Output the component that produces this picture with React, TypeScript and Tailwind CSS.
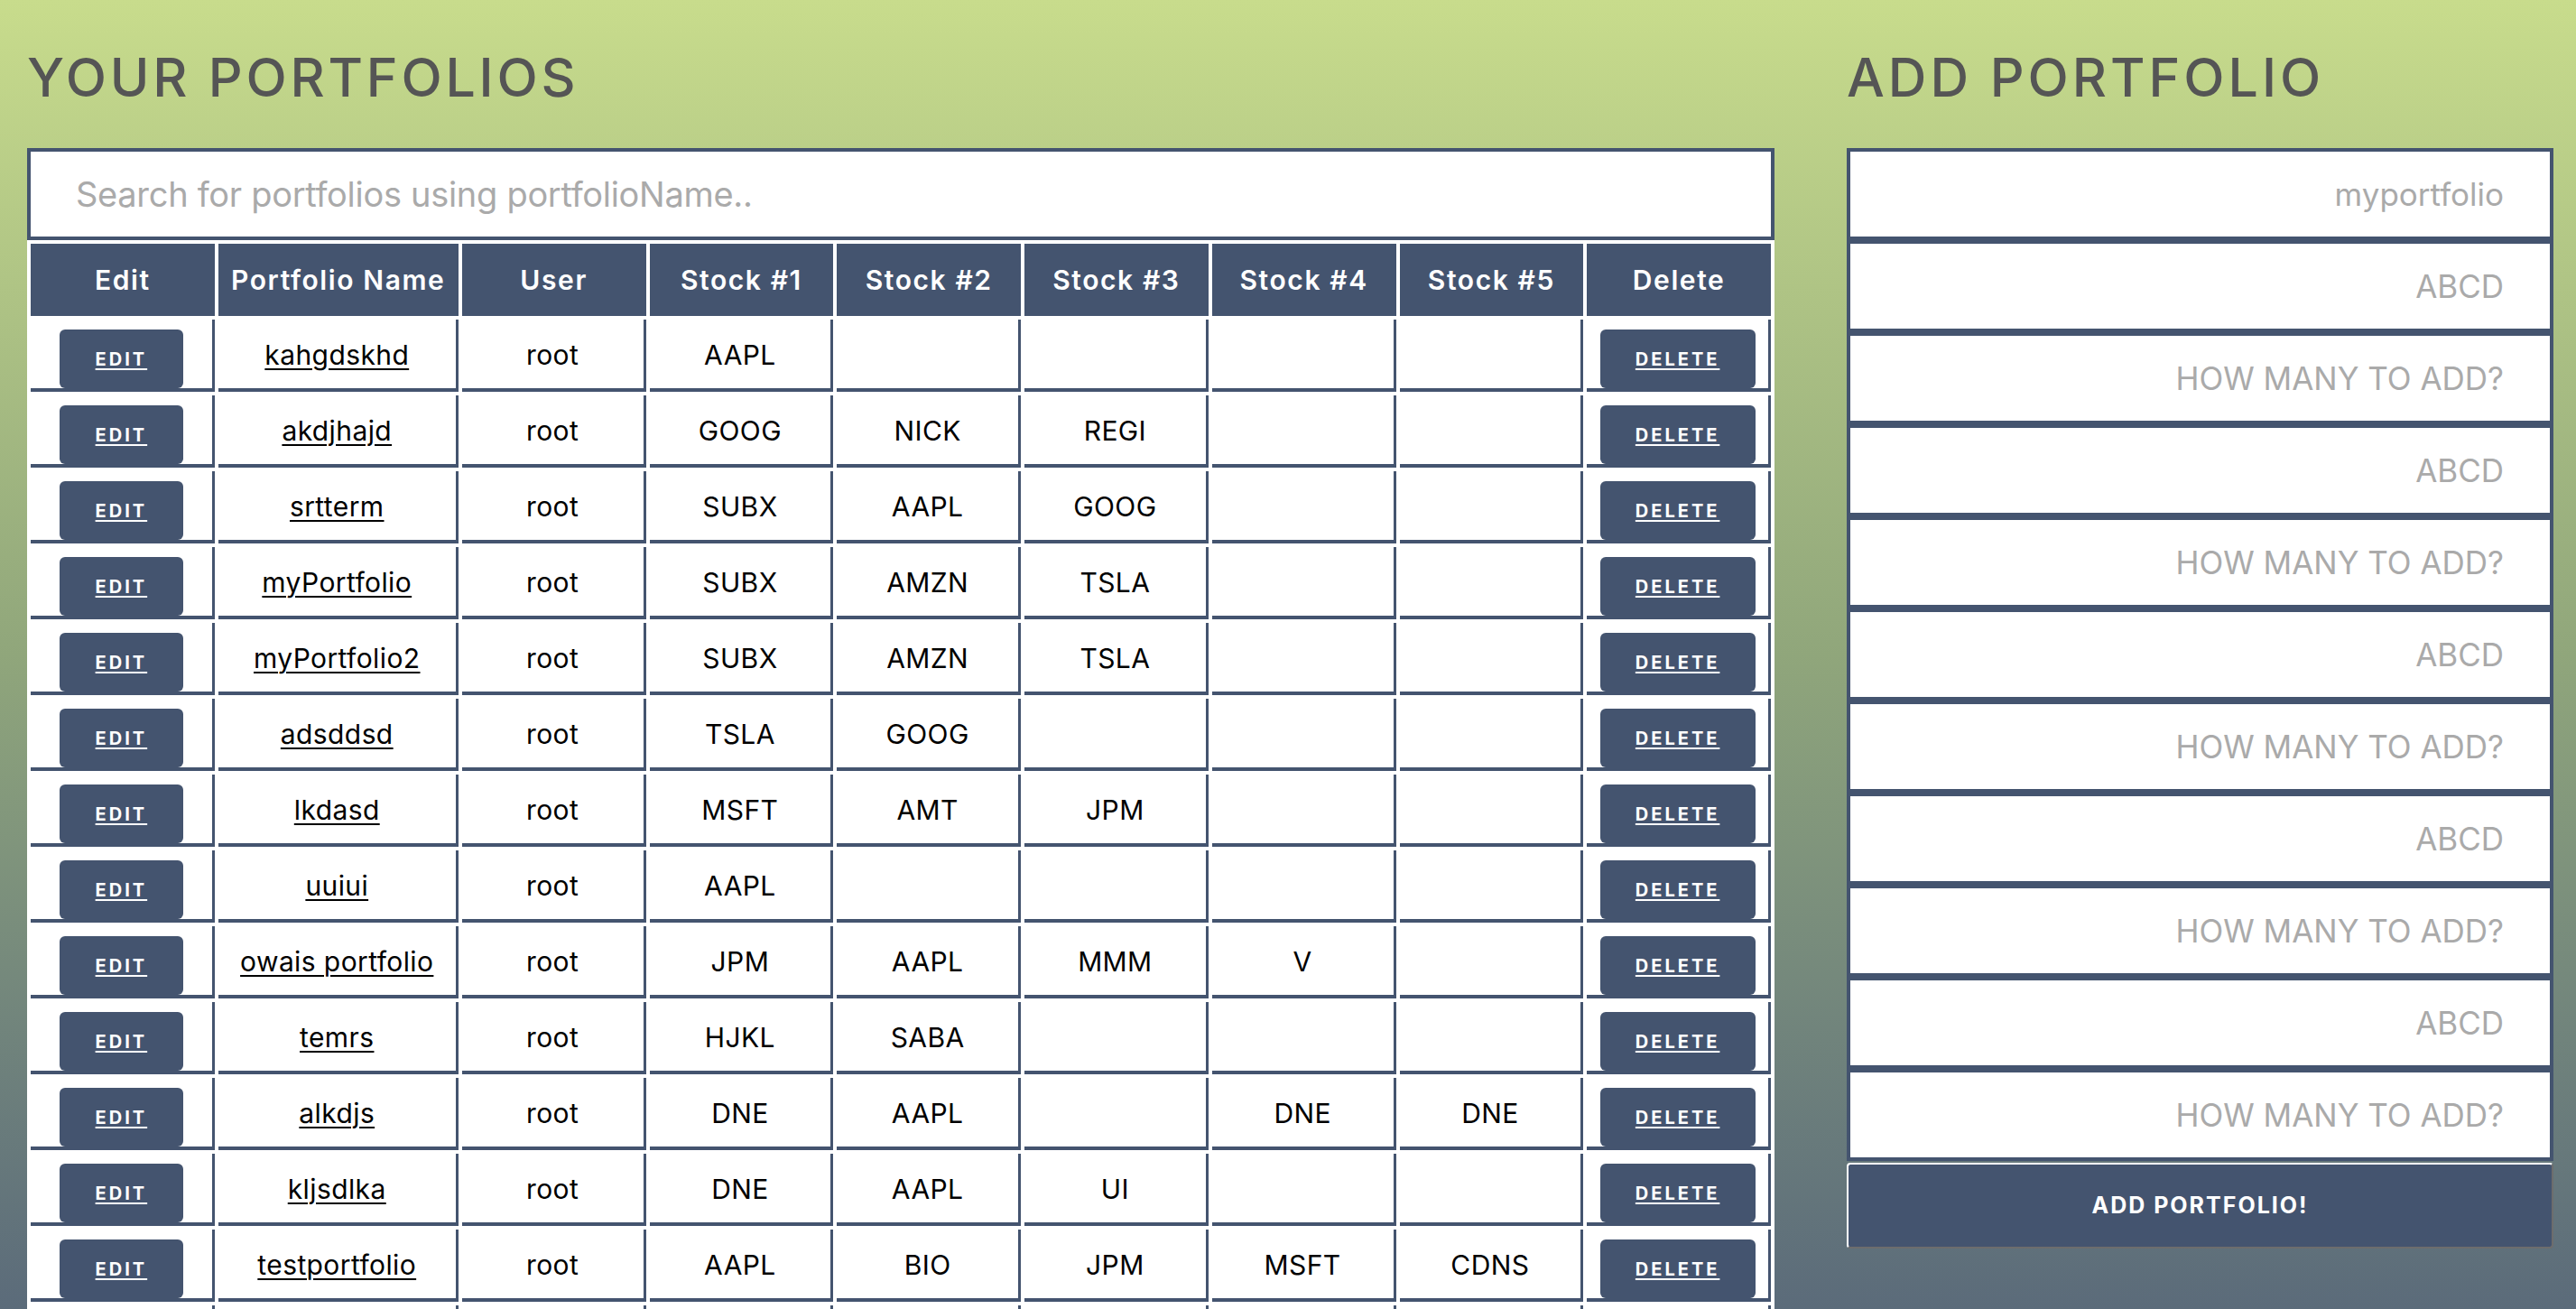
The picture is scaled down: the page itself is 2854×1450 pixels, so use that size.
import React from "react";

const rows: string[][] = [
  ["kahgdskhd", "root", "AAPL", "", "", "", ""],
  ["akdjhajd", "root", "GOOG", "NICK", "REGI", "", ""],
  ["srtterm", "root", "SUBX", "AAPL", "GOOG", "", ""],
  ["myPortfolio", "root", "SUBX", "AMZN", "TSLA", "", ""],
  ["myPortfolio2", "root", "SUBX", "AMZN", "TSLA", "", ""],
  ["adsddsd", "root", "TSLA", "GOOG", "", "", ""],
  ["lkdasd", "root", "MSFT", "AMT", "JPM", "", ""],
  ["uuiui", "root", "AAPL", "", "", "", ""],
  ["owais portfolio", "root", "JPM", "AAPL", "MMM", "V", ""],
  ["temrs", "root", "HJKL", "SABA", "", "", ""],
  ["alkdjs", "root", "DNE", "AAPL", "", "DNE", "DNE"],
  ["kljsdlka", "root", "DNE", "AAPL", "UI", "", ""],
  ["testportfolio", "root", "AAPL", "BIO", "JPM", "MSFT", "CDNS"],
];

const headers = ["Edit", "Portfolio Name", "User", "Stock #1", "Stock #2", "Stock #3", "Stock #4", "Stock #5", "Delete"];

const rightInputs = [
  "myportfolio",
  "ABCD",
  "HOW MANY TO ADD?",
  "ABCD",
  "HOW MANY TO ADD?",
  "ABCD",
  "HOW MANY TO ADD?",
  "ABCD",
  "HOW MANY TO ADD?",
  "ABCD",
  "HOW MANY TO ADD?",
];

export default function App() {
  return (
    <div className="h-screen overflow-hidden bg-linear-to-b from-[#c8dc8c] via-[#90a67b] to-[#5b6b7a] font-['Inter',sans-serif]">
      <div className="flex pl-[30px] gap-[80px]">
        <div className="w-[1936px] shrink-0">
          <h1 className="h-[164px] pt-[56px] text-[59px] leading-[60px] tracking-[3.8px] text-[#555555] font-medium">
            YOUR PORTFOLIOS
          </h1>
          <input
            className="block w-full h-[102px] border-4 border-[#44546f] bg-white pl-[50px] text-[38px] tracking-[-0.3px] placeholder:text-[#aaaaaa] outline-none"
            placeholder="Search for portfolios using portfolioName.."
          />
          <table className="w-full table-fixed border-separate border-spacing-[4px] bg-white">
            <thead>
              <tr className="h-[80px]">
                {headers.map((h) => (
                  <th
                    key={h}
                    className={`${h === "Portfolio Name" ? "w-[266px]" : ""} bg-[#44546f] text-white text-[30px] font-semibold tracking-[1.6px] text-center align-middle p-0`}
                  >
                    {h}
                  </th>
                ))}
              </tr>
            </thead>
            <tbody>
              {rows.map((r, i) => (
                <tr key={i} className="h-[80px]">
                  <td className="border-r-[3px] border-b-4 border-[#44546f] align-top pt-[11px] p-0">
                    <button className="mx-auto block w-[137px] h-[65px] rounded-[6px] bg-[#44546f] text-white text-[20px] font-bold underline underline-offset-[3px] tracking-[3px]">
                      EDIT
                    </button>
                  </td>
                  <td className="border-r-[3px] border-b-4 border-[#44546f] text-center align-middle pt-[2px] text-[30px] tracking-[0.4px] text-black underline underline-offset-[4px] decoration-[2px] p-0">
                    {r[0]}
                  </td>
                  {r.slice(1).map((c, j) => (
                    <td
                      key={j}
                      className="border-r-[3px] border-b-4 border-[#44546f] text-center align-middle pt-[2px] text-[30px] tracking-[0.4px] text-black p-0"
                    >
                      {c}
                    </td>
                  ))}
                  <td className="border-r-[3px] border-b-4 border-[#44546f] align-top pt-[11px] p-0">
                    <button className="mx-auto block w-[172px] h-[65px] rounded-[6px] bg-[#44546f] text-white text-[20px] font-bold underline underline-offset-[3px] tracking-[3px]">
                      DELETE
                    </button>
                  </td>
                </tr>
              ))}
              <tr className="h-[80px]">
                {headers.map((h) => (
                  <td key={h} className="border-r-[3px] border-b-4 border-[#44546f] p-0" />
                ))}
              </tr>
            </tbody>
          </table>
        </div>
        <div className="w-[783px] shrink-0">
          <h1 className="h-[164px] pt-[56px] text-[59px] leading-[60px] tracking-[4px] text-[#555555] font-medium">
            ADD PORTFOLIO
          </h1>
          {rightInputs.map((p, i) => (
            <input
              key={i}
              className="block w-full h-[102px] border-4 border-[#44546f] bg-white pr-[51px] text-right text-[35px] placeholder:text-[#aaaaaa] outline-none"
              placeholder={p}
            />
          ))}
          <button className="mt-[2px] block w-full h-[95px] rounded-[4px] border-2 border-t-white border-l-white border-r-[#6d6d6d] border-b-[#6d6d6d] bg-[#44546f] text-white text-[25px] font-bold tracking-[2px]">
            ADD PORTFOLIO!
          </button>
        </div>
      </div>
    </div>
  );
}
